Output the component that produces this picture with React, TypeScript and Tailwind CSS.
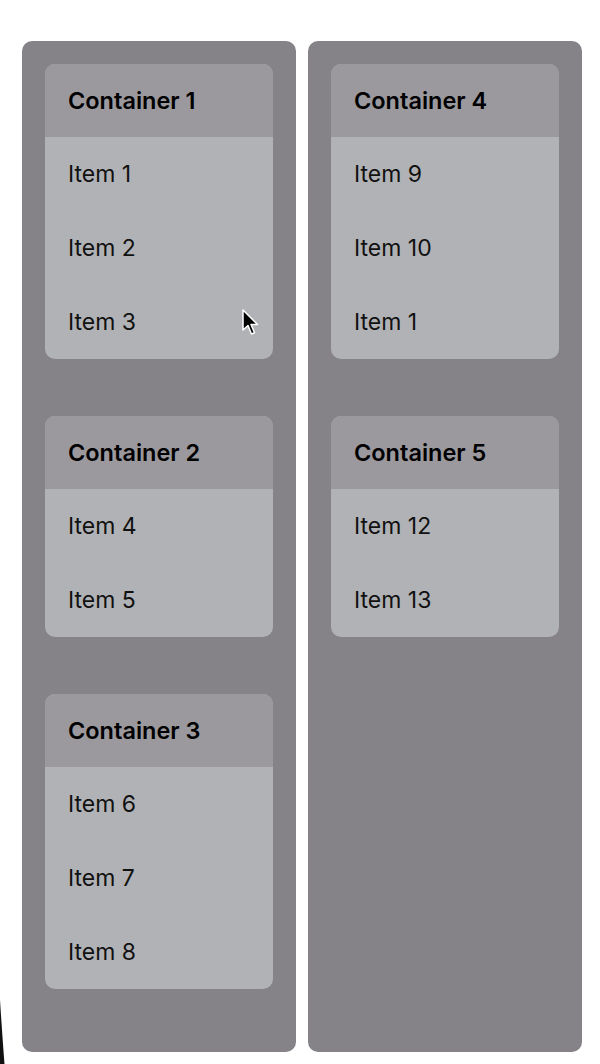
import React from 'react';

interface Container {
  id: number;
  items: string[];
}

const columns: Container[][] = [
  [
    { id: 1, items: ['Item 1', 'Item 2', 'Item 3'] },
    { id: 2, items: ['Item 4', 'Item 5'] },
    { id: 3, items: ['Item 6', 'Item 7', 'Item 8'] },
  ],
  [
    { id: 4, items: ['Item 9', 'Item 10', 'Item 1'] },
    { id: 5, items: ['Item 12', 'Item 13'] },
  ],
];

const ContainerCard: React.FC<{ container: Container }> = ({ container }) => (
  <div className="w-[228px] rounded-[10px] overflow-hidden bg-[#b1b2b5]">
    <div className="h-[73px] flex items-center px-[23px] bg-[#9b999d] text-[23.5px] font-semibold text-black">
      Container {container.id}
    </div>
    {container.items.map((item, i) => (
      <div key={i} className="h-[74px] flex items-center px-[23px] text-[23px] text-[#111]">
        {item}
      </div>
    ))}
  </div>
);

const App: React.FC = () => {
  return (
    <div className="relative w-[600px] h-[1064px] bg-white overflow-hidden" style={{ fontFamily: 'Inter, "Liberation Sans", sans-serif' }}>
      <div className="flex gap-[12px] pt-[41px] pl-[22px]">
        {columns.map((col, ci) => (
          <div key={ci} className="w-[274px] h-[1011px] rounded-[10px] bg-[#858388] p-[23px] flex flex-col gap-[57px]">
            {col.map((c) => (
              <ContainerCard key={c.id} container={c} />
            ))}
          </div>
        ))}
      </div>

      {/* mouse cursor */}
      <svg className="absolute left-[241px] top-[309px]" width="20" height="28" viewBox="0 0 20 28">
        <path d="M2 1 L2 21 L7 16.5 L10.5 25 L13.5 23.7 L10 15.5 L16.5 15.5 Z" fill="#000" stroke="#fff" strokeWidth="1.5" strokeLinejoin="round" />
      </svg>

      {/* screen corner edge */}
      <svg className="absolute left-0 top-[1000px]" width="6" height="64" viewBox="0 0 6 64">
        <path d="M0 0 C1.5 24 3 44 4.5 64 L0 64 Z" fill="#111" />
      </svg>
    </div>
  );
};

export default App;
